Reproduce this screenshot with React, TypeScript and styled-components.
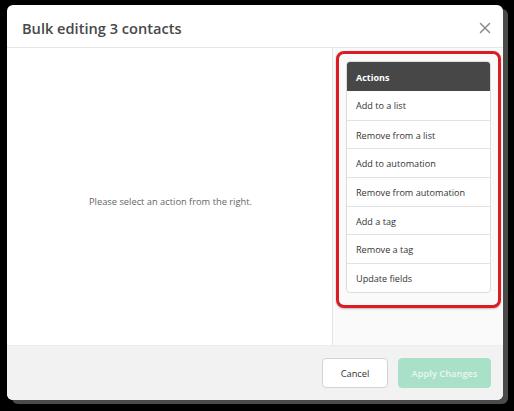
import React from "react";
import styled, { createGlobalStyle } from "styled-components";

const Global = createGlobalStyle`
  html, body { margin: 0; padding: 0; background: #000; }
  body { font-family: "Open Sans", "Liberation Sans", sans-serif; }
  * { box-sizing: border-box; }
`;

const Stage = styled.div`
  width: 514px;
  height: 411px;
  padding: 5px 0 0 7px;
  background: #000;
  overflow: hidden;
`;

const Modal = styled.div`
  width: 496px;
  height: 395px;
  background: #fff;
  border-radius: 6px;
  box-shadow: 5px 4px 0 #4b4b4b;
  display: flex;
  flex-direction: column;
  overflow: hidden;
`;

const Header = styled.div`
  height: 43px;
  flex: none;
  display: flex;
  align-items: center;
  justify-content: space-between;
  padding: 3px 11px 0 15px;
  border-bottom: 1px solid #e6e6e6;
`;

const Title = styled.h1`
  margin: 0;
  font-size: 14.6px;
  font-weight: 600;
  color: #484848;
`;

const Close = styled.button`
  border: none;
  background: none;
  padding: 0;
  width: 14px;
  height: 14px;
  display: flex;
  cursor: pointer;
`;

const Body = styled.div`
  flex: 1;
  display: flex;
  min-height: 0;
`;

const Empty = styled.div`
  flex: 1;
  display: flex;
  align-items: center;
  justify-content: center;
  font-size: 9.3px;
  color: #666;
  padding: 10px 0 0 2px;
`;

const Side = styled.div`
  width: 171px;
  flex: none;
  border-left: 1px solid #e4e4e4;
  background: #fafafa;
  padding: 3px 2px 0 3px;
`;

const Highlight = styled.div`
  border: 3px solid #dd1b22;
  border-radius: 8px;
  padding: 7px 7px 12px 7px;
  background: #fafafa;
  box-shadow: 0 1px 2px rgba(0, 0, 0, 0.25);
`;

const Card = styled.div`
  background: #fff;
  border: 1px solid #dcdcdc;
  border-radius: 4px;
  overflow: hidden;
`;

const CardHead = styled.div`
  height: 29px;
  background: #474747;
  color: #fff;
  font-size: 9px;
  font-weight: 700;
  display: flex;
  align-items: center;
  padding: 1px 0 0 9px;
`;

const Row = styled.div`
  height: 28.7px;
  display: flex;
  align-items: center;
  padding: 1px 0 0 9px;
  font-size: 9.1px;
  color: #333;
  border-top: 1px solid #e2e2e2;
  &:first-of-type { border-top: none; }
`;

const Footer = styled.div`
  height: 55px;
  flex: none;
  background: #f2f2f2;
  border-top: 1px solid #ececec;
  display: flex;
  justify-content: flex-end;
  align-items: flex-start;
  gap: 10px;
  padding: 12px 12px 0 0;
`;

const Button = styled.button<{ $primary?: boolean }>`
  height: 30px;
  border-radius: 4px;
  font-family: inherit;
  font-size: 9.3px;
  font-weight: ${(p) => (p.$primary ? 600 : 400)};
  padding: 0;
  width: ${(p) => (p.$primary ? "93px" : "66px")};
  border: 1px solid ${(p) => (p.$primary ? "#a9e0c8" : "#d2d2d2")};
  background: ${(p) => (p.$primary ? "#a9e0c8" : "#fff")};
  color: ${(p) => (p.$primary ? "#e9f7f0" : "#333")};
`;

const actions = [
  "Add to a list",
  "Remove from a list",
  "Add to automation",
  "Remove from automation",
  "Add a tag",
  "Remove a tag",
  "Update fields",
];

export default function App() {
  return (
    <>
      <Global />
      <Stage>
        <Modal>
          <Header>
            <Title>Bulk editing 3 contacts</Title>
            <Close aria-label="Close">
              <svg width="14" height="14" viewBox="0 0 14 14">
                <path d="M2.5 2.5 L11.5 11.5 M11.5 2.5 L2.5 11.5" stroke="#8a8a8a" strokeWidth="1.5" strokeLinecap="round" />
              </svg>
            </Close>
          </Header>
          <Body>
            <Empty>Please select an action from the right.</Empty>
            <Side>
              <Highlight>
                <Card>
                  <CardHead>Actions</CardHead>
                  <div>
                    {actions.map((a) => (
                      <Row key={a}>{a}</Row>
                    ))}
                  </div>
                </Card>
              </Highlight>
            </Side>
          </Body>
          <Footer>
            <Button>Cancel</Button>
            <Button $primary>Apply Changes</Button>
          </Footer>
        </Modal>
      </Stage>
    </>
  );
}
